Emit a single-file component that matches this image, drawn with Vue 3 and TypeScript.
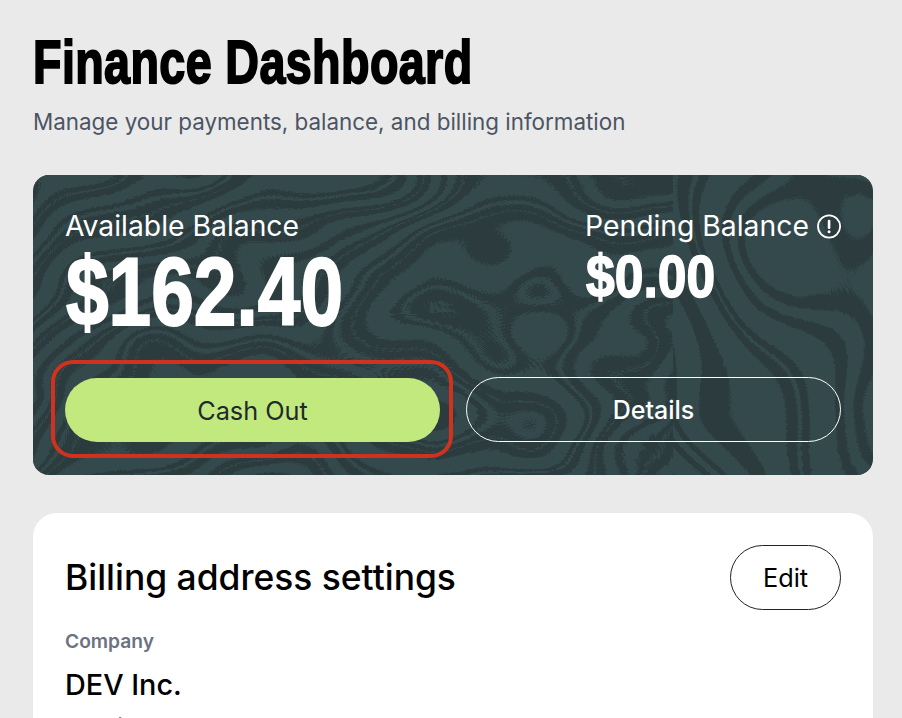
<script setup lang="ts">
</script>

<template>
  <main class="page">
    <h1 class="title">Finance Dashboard</h1>
    <p class="subtitle">Manage your payments, balance, and billing information</p>

    <section class="balance">
      <svg class="marble" viewBox="0 0 840 300" preserveAspectRatio="none" aria-hidden="true">
        <defs>
          <pattern id="stripes" width="168" height="168" patternUnits="userSpaceOnUse" patternTransform="rotate(-20) scale(1.3)">
            <rect x="0" y="0" width="168" height="9" fill="#34494b" />
            <rect x="0" y="15" width="168" height="2" fill="#34494b" />
            <rect x="0" y="27" width="168" height="16" fill="#34494b" />
            <rect x="0" y="49" width="168" height="5" fill="#34494b" />
            <rect x="0" y="62" width="168" height="1.5" fill="#34494b" />
            <rect x="0" y="74" width="168" height="22" fill="#34494b" />
            <rect x="0" y="102" width="168" height="4" fill="#34494b" />
            <rect x="0" y="116" width="168" height="12" fill="#34494b" />
            <rect x="0" y="135" width="168" height="1.5" fill="#34494b" />
            <rect x="0" y="146" width="168" height="14" fill="#34494b" />
          </pattern>
          <pattern id="stripesB" width="150" height="150" patternUnits="userSpaceOnUse" patternTransform="rotate(62) scale(1.6)">
            <rect x="0" y="0" width="150" height="24" fill="#34494b" />
            <rect x="0" y="32" width="150" height="10" fill="#34494b" />
            <rect x="0" y="52" width="150" height="30" fill="#34494b" />
            <rect x="0" y="90" width="150" height="4" fill="#34494b" />
            <rect x="0" y="104" width="150" height="28" fill="#34494b" />
          </pattern>
          <filter id="warpA" filterUnits="userSpaceOnUse" x="-300" y="-300" width="1440" height="900" color-interpolation-filters="sRGB">
            <feTurbulence type="fractalNoise" baseFrequency="0.0032 0.0046" numOctaves="3" seed="8" result="n" />
            <feDisplacementMap in="SourceGraphic" in2="n" scale="420" xChannelSelector="R" yChannelSelector="G" />
          </filter>
          <filter id="warpB" filterUnits="userSpaceOnUse" x="300" y="-300" width="840" height="900" color-interpolation-filters="sRGB">
            <feTurbulence type="fractalNoise" baseFrequency="0.0042" numOctaves="2" seed="21" result="n" />
            <feDisplacementMap in="SourceGraphic" in2="n" scale="360" xChannelSelector="R" yChannelSelector="G" />
          </filter>
          <clipPath id="tileA"><rect x="0" y="0" width="640" height="300" /></clipPath>
          <clipPath id="tileB"><rect x="640" y="0" width="200" height="300" /></clipPath>
        </defs>
        <rect x="0" y="0" width="840" height="300" fill="#2b3b3e" />
        <g clip-path="url(#tileA)">
          <rect x="-300" y="-300" width="1440" height="900" fill="url(#stripes)" filter="url(#warpA)" />
        </g>
        <g clip-path="url(#tileB)">
          <rect x="300" y="-300" width="840" height="900" fill="url(#stripesB)" filter="url(#warpB)" />
        </g>
      </svg>
      <div class="balance-top">
        <div class="available">
          <div class="label">Available Balance</div>
          <div class="amount">$162.40</div>
        </div>
        <div class="pending">
          <div class="label pending-label">
            Pending Balance
            <svg class="info" viewBox="0 0 24 24" aria-hidden="true">
              <circle cx="12" cy="12" r="11" fill="none" stroke="#fff" stroke-width="1.8" />
              <path d="M12 6.5v6.8" fill="none" stroke="#fff" stroke-width="2.6" stroke-linecap="round" />
              <circle cx="12" cy="17.2" r="1.5" fill="#fff" />
            </svg>
          </div>
          <div class="amount small">$0.00</div>
        </div>
      </div>
      <div class="actions">
        <div class="cash-wrap">
          <button class="btn cash" type="button">Cash Out</button>
          <span class="annotation"></span>
        </div>
        <button class="btn details" type="button">Details</button>
      </div>
    </section>

    <section class="billing">
      <div class="billing-head">
        <h2 class="billing-title">Billing address settings</h2>
        <button class="edit" type="button">Edit</button>
      </div>
      <div class="field-label">Company</div>
      <div class="field-value">DEV Inc.</div>
      <div class="field-label next">Website</div>
    </section>
  </main>
</template>

<style>
html, body { margin: 0; background: #eaeaea; }
body { overflow: hidden; height: 718px; }
</style>

<style scoped>
.page {
  width: 902px;
  height: 718px;
  box-sizing: border-box;
  padding: 31px 29px 0 33px;
  overflow: hidden;
  background: #eaeaea;
  font-family: Inter, "Liberation Sans", sans-serif;
  color: #000;
}
.title {
  margin: 0;
  font-family: "Liberation Sans", sans-serif;
  font-size: 61px;
  line-height: 62px;
  font-weight: 700;
  -webkit-text-stroke: 2px #000;
  letter-spacing: 0.5px;
  white-space: nowrap;
  transform: scaleX(0.765);
  transform-origin: left center;
}
.subtitle {
  margin: 15px 0 0;
  font-size: 22.4px;
  line-height: 28px;
  color: #4b5563;
}
.balance {
  position: relative;
  margin-top: 39px;
  height: 300px;
  box-sizing: border-box;
  padding: 33px 32px 33px;
  border-radius: 16px;
  overflow: hidden;
  color: #fff;
  display: flex;
  flex-direction: column;
  justify-content: space-between;
}
.marble {
  position: absolute;
  inset: 0;
  width: 100%;
  height: 100%;
}
.balance-top {
  position: relative;
  display: flex;
  justify-content: space-between;
}
.label {
  font-size: 28.3px;
  line-height: 36px;
}
.pending {
  width: 256px;
}
.pending-label {
  display: flex;
  align-items: center;
  gap: 8px;
  white-space: nowrap;
}
.info {
  width: 25px;
  height: 25px;
}
.amount {
  margin-left: 1px;
  font-family: "Liberation Sans", sans-serif;
  font-weight: 700;
  font-size: 97px;
  line-height: 96px;
  -webkit-text-stroke: 2px #fff;
  white-space: nowrap;
  transform: scaleX(0.79);
  transform-origin: left center;
}
.amount.small {
  font-size: 60px;
  line-height: 66px;
  -webkit-text-stroke: 1.6px #fff;
  transform: scaleX(0.86);
}
.actions {
  position: relative;
  display: flex;
  gap: 26px;
}
.cash-wrap {
  position: relative;
  width: 375px;
  padding-top: 1px;
}
.btn {
  display: block;
  border-radius: 33px;
  font-family: inherit;
  cursor: pointer;
}
.cash {
  width: 100%;
  height: 64px;
  font-size: 25.3px;
  background: #c2e97e;
  border: 0;
  color: #1f2a2c;
}
.details {
  width: 375px;
  height: 65px;
  font-size: 25px;
  background: transparent;
  border: 1px solid #fff;
  color: #fff;
  font-weight: 500;
}
.annotation {
  position: absolute;
  left: -14px;
  right: -13px;
  top: -17px;
  bottom: -16px;
  border: 4px solid #d1321f;
  border-radius: 22px;
  box-sizing: border-box;
  pointer-events: none;
}
.billing {
  margin-top: 38px;
  background: #fff;
  border-radius: 24px;
  padding: 32px;
  height: 400px;
  box-sizing: border-box;
}
.billing-head {
  display: flex;
  justify-content: space-between;
  align-items: center;
}
.billing-title {
  margin: 0;
  font-size: 35.4px;
  line-height: 40px;
  font-weight: 500;
}
.edit {
  width: 111px;
  height: 65px;
  border-radius: 33px;
  background: #fff;
  border: 1px solid #222;
  font-family: inherit;
  font-size: 25.3px;
  color: #000;
  cursor: pointer;
}
.field-label {
  margin-top: 19px;
  font-size: 19.2px;
  line-height: 24px;
  font-weight: 600;
  color: #6b7280;
}
.field-value {
  margin-top: 14px;
  font-size: 28.8px;
  line-height: 36px;
  font-weight: 500;
}
.field-label.next {
  margin-top: 10px;
}
</style>
